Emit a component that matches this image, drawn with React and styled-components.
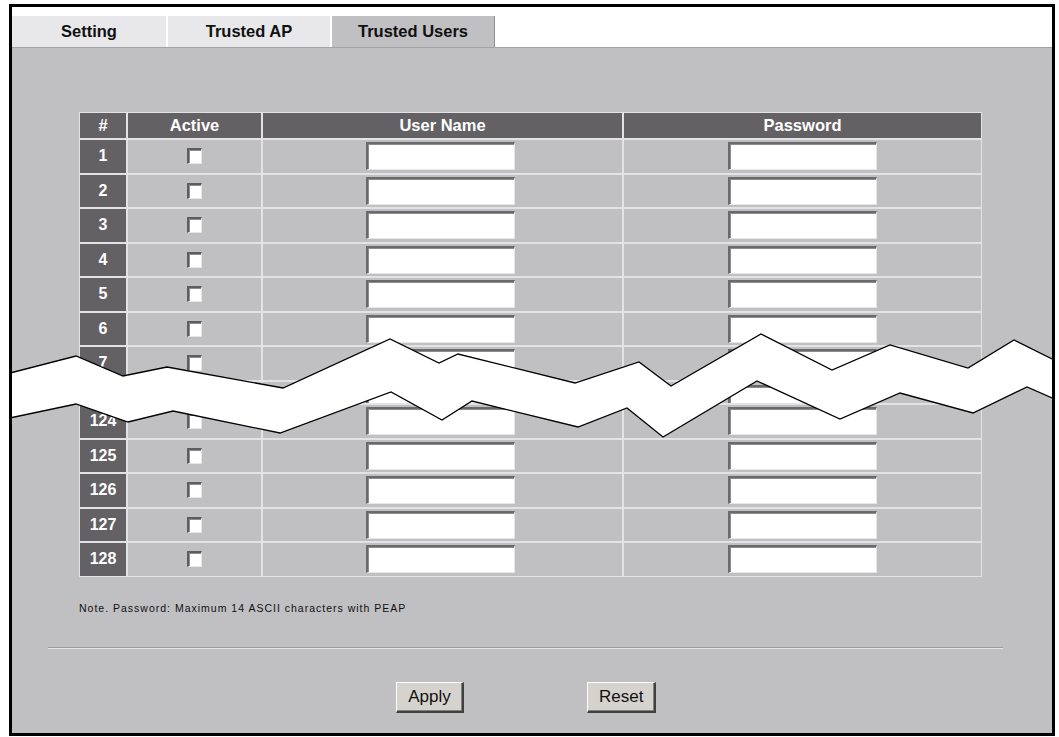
import styled, { createGlobalStyle } from "styled-components";

const GlobalStyles = createGlobalStyle`
  body {
    margin: 0;
    background: #fff;
    font-family: "Liberation Sans", Arial, sans-serif;
  }
`;

const topLine = [
  [12, 372.5], [76, 356], [123, 376], [167, 367], [283, 388], [390, 339],
  [439, 363], [458, 354], [575, 383], [639, 362], [671, 386], [761, 334],
  [832, 370], [890, 345], [968, 368], [1014, 340], [1052, 359],
];
const bottomLine = [
  [12, 417.5], [76, 404], [128, 422], [173, 411], [280, 433], [391, 392],
  [442, 420], [472, 401], [578, 427], [627, 408], [663, 437], [757, 381],
  [840, 419], [900, 393], [973, 413], [1027, 387], [1052, 398],
];
const pts = (list) => list.map((p) => p.join(",")).join(" ");

const rows = [1, 2, 3, 4, 5, 6, 7, "", 124, 125, 126, 127, 128];

const App = () => {
  return (
    <>
      <GlobalStyles />
      <Frame>
        <TabBar>
          <Tab $w={154}>Setting</Tab>
          <Tab $w={162}>Trusted AP</Tab>
          <Tab $w={162} $active>Trusted Users</Tab>
        </TabBar>

        <Body>
          <Grid>
            <HeadCell>#</HeadCell>
            <HeadCell>Active</HeadCell>
            <HeadCell>User Name</HeadCell>
            <HeadCell>Password</HeadCell>
            {rows.map((n, i) => {
              const cut = n === "";
              return [
                <NumCell key={`n${i}`} $cut={cut}>{n}</NumCell>,
                <Cell key={`a${i}`} $cut={cut}><Check type="checkbox" /></Cell>,
                <Cell key={`u${i}`} $cut={cut} $shift={-2}><Field type="text" /></Cell>,
                <Cell key={`p${i}`} $cut={cut}><Field type="password" /></Cell>,
              ];
            })}
          </Grid>

          <Note>Note. Password: Maximum 14 ASCII characters with PEAP</Note>
          <Rule />
          <Buttons>
            <Button>Apply</Button>
            <Button>Reset</Button>
          </Buttons>
        </Body>

        <Break viewBox="12 7 1040 726" width="1040" height="726">
          <polygon points={pts([...topLine, ...bottomLine.slice().reverse()])} fill="#fff" />
          <polyline points={pts(topLine)} fill="none" stroke="#000" strokeWidth="1.3" />
          <polyline points={pts(bottomLine)} fill="none" stroke="#000" strokeWidth="1.3" />
        </Break>
      </Frame>
    </>
  );
};

export default App;

const Frame = styled.div`
  position: relative;
  box-sizing: border-box;
  margin: 4px 0 0 9px;
  width: 1046px;
  height: 732px;
  border: 3px solid #000;
  background: #c0bfc2;
  display: flex;
  flex-direction: column;
  overflow: hidden;
`;

const TabBar = styled.div`
  display: flex;
  gap: 2px;
  padding-top: 9px;
  background: #fff;
  border-bottom: 1px solid #a3a2a6;
`;

const Tab = styled.div`
  width: ${(p) => p.$w}px;
  height: 31px;
  display: flex;
  align-items: center;
  justify-content: center;
  font-size: 16.5px;
  font-weight: 700;
  color: #111;
  background: ${(p) => (p.$active ? "#c0bfc2" : "#e8e8ea")};
  border-right: ${(p) => (p.$active ? "1px solid #8f8e92" : "none")};
`;

const Body = styled.div`
  flex: 1;
  padding-top: 64px;
`;

const Grid = styled.div`
  margin-left: 67px;
  width: fit-content;
  display: grid;
  grid-template-columns: 46px 133px 359px 357px;
  grid-template-rows: 25px repeat(7, 32.5px) 21.5px repeat(5, 32.5px);
  gap: 2px;
  padding: 1px;
  background: #e3e3e5;
`;

const HeadCell = styled.div`
  background: #636163;
  color: #fff;
  font-size: 16.5px;
  font-weight: 700;
  display: flex;
  align-items: center;
  justify-content: center;
`;

const Cell = styled.div`
  background: #c0bfc2;
  display: flex;
  justify-content: center;
  align-items: ${(p) => (p.$cut ? "flex-start" : "center")};
  padding-top: ${(p) => (p.$cut ? "3px" : "0")};
  padding-right: ${(p) => (p.$shift ? `${-p.$shift * 2}px` : "0")};
  overflow: hidden;
`;

const NumCell = styled(Cell)`
  background: #636163;
  color: #fff;
  font-size: 16px;
  font-weight: 700;
`;

const Field = styled.input`
  box-sizing: border-box;
  width: 149px;
  height: 28px;
  margin: 0;
  background: #fff;
  border-style: solid;
  border-width: 2px 1px 1px 2px;
  border-color: #6a696c #e6e6e8 #e6e6e8 #6a696c;
  box-shadow: inset 1px 1px 0 #8c8b8e;
  outline: none;
`;

const Check = styled.input`
  appearance: none;
  box-sizing: border-box;
  width: 15px;
  height: 16px;
  margin: 0;
  background: #fff;
  border-style: solid;
  border-width: 2px 1px 1px 2px;
  border-color: #5e5d60 #e6e6e8 #e6e6e8 #5e5d60;
  box-shadow: inset 1px 1px 0 #8c8b8e;
`;

const Note = styled.p`
  margin: 25px 0 0 67px;
  font-size: 10.5px;
  line-height: 12px;
  letter-spacing: 1px;
  color: #111;
`;

const Rule = styled.div`
  margin: 33px 0 0 36px;
  width: 955px;
  height: 1px;
  background: #9a999c;
  border-bottom: 1px solid #e4e4e6;
`;

const Buttons = styled.div`
  display: flex;
  gap: 123px;
  margin-top: 33px;
  padding-left: 384px;
`;

const Button = styled.button`
  box-sizing: border-box;
  height: 31px;
  padding: 0 11px;
  min-width: 68px;
  font-family: "Liberation Sans", Arial, sans-serif;
  font-size: 17px;
  color: #111;
  background: #d6d3ce;
  border-style: solid;
  border-width: 1px 2px 2px 1px;
  border-color: #fff #404040 #404040 #fff;
  box-shadow: inset -1px -1px 0 #808080;
`;

const Break = styled.svg`
  position: absolute;
  left: 0;
  top: 0;
  pointer-events: none;
`;
